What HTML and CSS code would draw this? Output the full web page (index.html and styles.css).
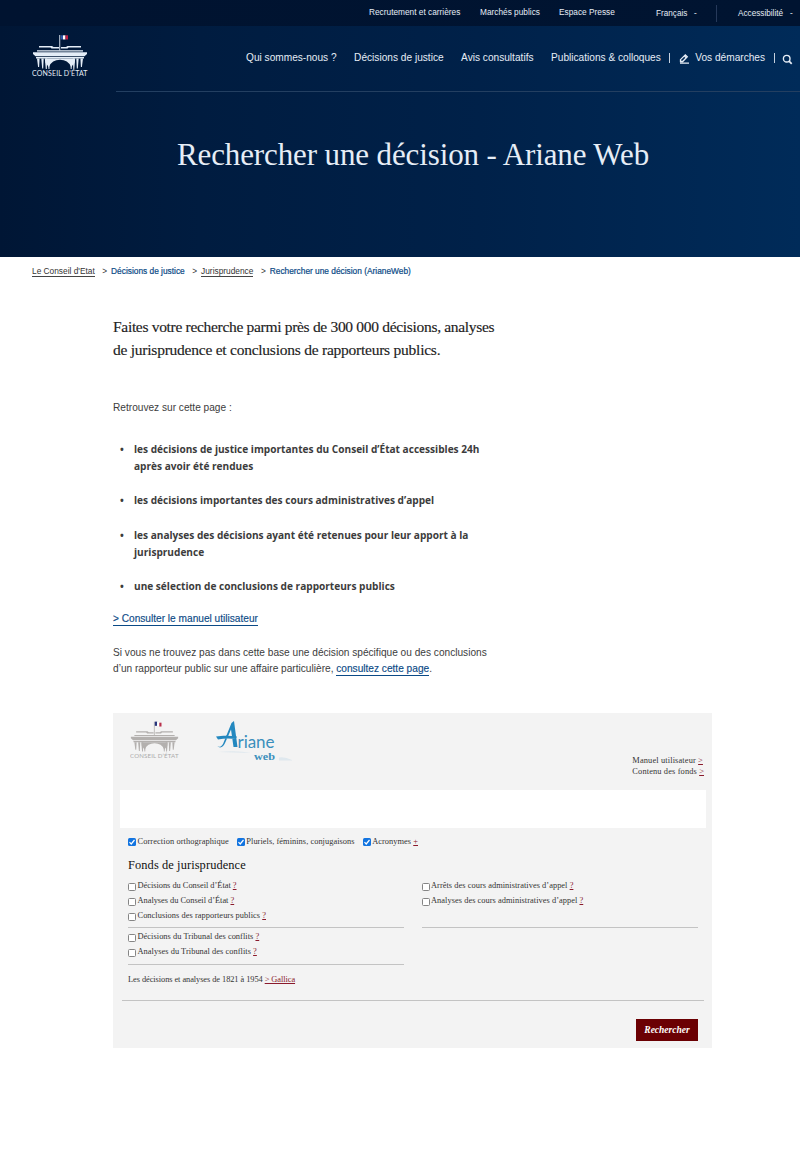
FILE: index.html
```html
<!DOCTYPE html>
<html lang="fr">
<head>
<meta charset="utf-8">
<title>Rechercher une décision - ArianeWeb</title>
<link rel="stylesheet" href="styles.css">
</head>
<body>
<header class="hero">
  <div class="topbar">
    <a>Recrutement et carrières</a>
    <a>Marchés publics</a>
    <a>Espace Presse</a>
    <a class="low">Français</a><span class="low">-</span>
    <i class="topsep"></i>
    <a class="low">Accessibilité</a><span class="low">-</span>
  </div>
  <div class="mainbar">
    <svg class="crest" viewBox="0 0 56 44">
      <defs>
        <g id="building">
          <path d="M7 12h13l1.500 1H27v1.500h-7.500l-1-1H7zM29 13h5l1.500-1H49v1.500H36.500l-1 1H29z"/>
          <path d="M5 16.300h46v1.200H5zM1 18.200h54v1.700l-2.500 2.300h-49L1 19.900zM4 23h48v1.500H4z"/>
          <path d="M13.500 24.500h29v4l-3.200 4.500q-3.300-7.300-11.300-7.300T16.700 33l-3.200-4.500z"/>
          <path d="M5 24.500h2.600l-.5 8.500h-1zM9.300 24.500h2.400l-.5 10h-1zM12.800 24.500h2.400l-.4 10.500h-1zM15.700 26h2.200l-.5 9h-.9zM48.400 24.500H51L49.900 33h-1zM44.300 24.500h2.400l-.9 10h-1zM40.800 24.500h2.400l-.9 10.500h-1zM38.100 26h2.200l-.7 9h-.9z"/>
          <path d="M27.300 1h.9v15.500h-.9z"/>
        </g>
      </defs>
      <use href="#building" fill="#e4edf7"/>
      <path d="M28.800 1.300h2.200v4.200h-2.200z" fill="#2d55a5"/><path d="M31 1.300h2.500v4.200H31z" fill="#fff"/><path d="M33.500 1.300H36v4.200h-2.500z" fill="#c31e43"/>
      <text x="0" y="41.500" textLength="55.500" class="cresttext">CONSEIL D’ÉTAT</text>
    </svg>
    <nav class="nav">
      <a>Qui sommes-nous ?</a>
      <a>Décisions de justice</a>
      <a>Avis consultatifs</a>
      <a class="last">Publications &amp; colloques</a>
      <i class="navsep"></i>
      <svg class="pen" viewBox="0 0 11 11"><path d="M1.500 6.600 6.300 1.800l2 2L3.700 8.500H1.500zM5.200 2.800l2 2M1 10.200h9" fill="none" stroke="#e6edf6" stroke-width="1.300"/></svg>
      <a class="last">Vos démarches</a>
      <i class="navsep"></i>
      <svg class="glass" viewBox="0 0 11 11"><circle cx="4.700" cy="4.700" r="3.300" fill="none" stroke="#e6edf6" stroke-width="1.400"/><path d="m7.100 7.100 2.600 2.700" stroke="#e6edf6" stroke-width="1.700"/></svg>
    </nav>
  </div>
  <h1 class="title">Rechercher une décision - Ariane Web</h1>
</header>
<div class="crumbs">
  <a class="lined">Le Conseil d'Etat</a><span>&gt;</span>
  <a class="blue">Décisions de justice</a><span>&gt;</span>
  <a class="lined">Jurisprudence</a><span>&gt;</span>
  <a class="blue">Rechercher une décision (ArianeWeb)</a>
</div>
<main class="content">
  <p class="lead">Faites votre recherche parmi près de 300 000 décisions, analyses<br><span class="second">de jurisprudence et conclusions de rapporteurs publics.</span></p>
  <p class="find">Retrouvez sur cette page :</p>
  <ul class="list">
    <li>les décisions de justice importantes du Conseil d’État accessibles 24h<br>après avoir été rendues</li>
    <li>les décisions importantes des cours administratives d’appel</li>
    <li>les analyses des décisions ayant été retenues pour leur apport à la<br>jurisprudence</li>
    <li>une sélection de conclusions de rapporteurs publics</li>
  </ul>
  <p class="manual"><a class="link">&gt; Consulter le manuel utilisateur</a></p>
  <p class="note">Si vous ne trouvez pas dans cette base une décision spécifique ou des conclusions<br>d’un rapporteur public sur une affaire particulière, <a class="link">consultez cette page</a>.</p>

  <section class="panel">
    <div class="panelhead">
      <svg class="crest2" viewBox="0 0 56 44">
        <use href="#building" fill="#b3b0ae"/>
        <path d="M28.300 1h2.700v4.800h-2.700z" fill="#27357c"/><path d="M31 1.500h2.500v4.500H31z" fill="#fff"/><path d="M33.500 2.200H36v4.400h-2.500z" fill="#b8304b"/>
        <text x="0" y="42.500" textLength="55.500" class="cresttext grey">CONSEIL D’ÉTAT</text>
      </svg>
      <svg class="ariane" viewBox="0 0 80 44">
        <path d="M1 26c2 1.500 4 1 6-2L15.500 3 18 1l3.500 26h-4L15 9.500 9.500 22c-2 5-5 7-8.500 4zM0 16.500c6-1 14-1 21 0l-1 2.500c-6-.8-12-.8-18 .5z" fill="#2488bf"/>
        <text x="21.500" y="27.500" textLength="37" class="ar1">riane</text>
        <text x="38" y="39.500" textLength="21" lengthAdjust="spacingAndGlyphs" class="ar2">web</text>
        <path d="M2 32q20-2 33 1zM63 37.500q6-1 13 2.500v.5H63z" fill="#dfe8ee"/>
      </svg>
      <div class="helps"><a>Manuel utilisateur <u>&gt;</u></a><a>Contenu des fonds <u>&gt;</u></a></div>
    </div>
    <div class="searchbox"></div>
    <div class="options">
      <label><i class="check on"><svg viewBox="0 0 8 8"><path d="M1.500 4.200 3.200 6 6.500 2"/></svg></i><span>Correction orthographique</span></label>
      <label><i class="check on"><svg viewBox="0 0 8 8"><path d="M1.500 4.200 3.200 6 6.500 2"/></svg></i><span>Pluriels, féminins, conjugaisons</span></label>
      <label><i class="check on"><svg viewBox="0 0 8 8"><path d="M1.500 4.200 3.200 6 6.500 2"/></svg></i><span>Acronymes <u>+</u></span></label>
    </div>
    <h2 class="fonds">Fonds de jurisprudence</h2>
    <div class="columns">
      <div class="col">
        <div class="group tall">
          <label><i class="check"></i><span class="snug">Décisions du Conseil d’État <u>?</u></span></label>
          <label><i class="check"></i><span class="snug">Analyses du Conseil d’État <u>?</u></span></label>
          <label><i class="check"></i><span>Conclusions des rapporteurs publics <u>?</u></span></label>
        </div>
        <div class="group short">
          <label><i class="check"></i><span>Décisions du Tribunal des conflits <u>?</u></span></label>
          <label><i class="check"></i><span>Analyses du Tribunal des conflits <u>?</u></span></label>
        </div>
      </div>
      <div class="col">
        <div class="group tall">
          <label><i class="check"></i><span>Arrêts des cours administratives d’appel <u>?</u></span></label>
          <label><i class="check"></i><span>Analyses des cours administratives d’appel <u>?</u></span></label>
        </div>
      </div>
    </div>
    <p class="gallica">Les décisions et analyses de 1821 à 1954 <u>&gt; Gallica</u></p>
    <div class="actions"><button class="submit">Rechercher</button></div>
  </section>
</main>
</body>
</html>
```
FILE: styles.css
```css
* { box-sizing: border-box; }
body { margin: 0; background: #fff; color: #3c3c3c; font-family: "Liberation Sans", Arial, sans-serif; }
h1, h2, p, ul { margin: 0; padding: 0; font-weight: normal; }
a, span { white-space: nowrap; }

/* Header */
.hero { height: 257px; background: linear-gradient(90deg, #001635 0%, #001c40 25%, #002149 60%, #002b59 100%); color: #e6edf6; }
.topbar { height: 26px; background: linear-gradient(90deg, #001330, #001431); display: grid; grid-template-columns: 111px 79px 97px 38px 22px 22px 52px auto; padding-left: 369px; font-size: 8.300px; line-height: 25px; justify-items: start; }
.low { padding-top: 1px; font-size: 8.200px; }
.topsep { width: 1px; height: 17px; margin-top: 5px; background: #26395a; }
.mainbar { height: 66px; display: flex; margin-left: 32px; }
.crest { width: 56px; height: 44px; margin-top: 8px; flex: none; }
.cresttext { font: 7px "Lato", sans-serif; fill: #e4edf7; }
.cresttext.grey { fill: #aaa; }
.nav { flex: 1; margin-left: 28px; padding-left: 130px; border-bottom: 1px solid #233f61; display: flex; font-size: 10.150px; line-height: 64px; }
.nav a { margin-right: 17.500px; }
.nav .last { margin-right: 0; }
.navsep { width: 1px; height: 10px; background: #c5d0de; margin: 27px 8.500px 0; flex: none; }
.pen { width: 11px; height: 11px; margin: 27px 5.500px 0 0; flex: none; }
.glass { width: 11px; height: 11px; margin: 28px 0 0 -1.500px; flex: none; }
.title { padding: 42px 0 0 177px; font: 31px/42px "Liberation Serif", serif; letter-spacing: -.12px; }

/* Breadcrumb */
.crumbs { display: flex; padding: 9px 0 0 32px; font-size: 8.330px; line-height: 11px; height: 24px; color: #333; }
.crumbs span { margin: 0 4px 0 7.500px; }
.blue { color: #0b4a86; -webkit-text-stroke: .2px #0b4a86; }
.lined { border-bottom: 1px solid #444; height: 11px; }

/* Editorial content */
.content { padding-left: 113px; }
.lead { padding-top: 34px; font: 15.500px/23px "Liberation Serif", serif; letter-spacing: -.31px; color: #222; -webkit-text-stroke: .15px #222; }
.second { letter-spacing: -.24px; }
.find { padding-top: 38px; font-size: 10.150px; line-height: 17px; }
.list { list-style: none; padding: 25px 0 0 21px; font: bold 10.100px/17px "Open Sans", sans-serif; }
.list li { margin-bottom: 17.400px; position: relative; }
.list li:last-child { margin-bottom: 14px; }
.list li::before { content: "•"; position: absolute; left: -14px; }
.manual { font-size: 10.150px; line-height: 17px; padding-top: 1px; }
.link { color: #0b4a86; border-bottom: 1px solid #0b4a86; padding-bottom: 1px; -webkit-text-stroke: .15px #0b4a86; }
.note { font-size: 10.130px; line-height: 16px; padding-top: 18px; }

/* Search panel */
.panel { width: 599px; height: 335px; margin-top: 36px; background: #f3f3f3; font-family: "Liberation Serif", serif; font-size: 8.400px; letter-spacing: .04px; color: #333; }
.panelhead { height: 77px; display: flex; padding: 7px 8px 0 17px; }
.crest2 { width: 49px; height: 40px; }
.ariane { width: 80px; height: 44px; margin-left: 37px; }
.ar1 { font: 17px "Lato", sans-serif; fill: #3a8fbc; }
.ar2 { font: bold 9.500px "Liberation Serif", serif; fill: #3a8fbc; }
.helps { margin-left: auto; padding-top: 35px; line-height: 11px; letter-spacing: .13px; display: flex; flex-direction: column; align-items: flex-start; }
u { color: #8a1a2c; }
.searchbox { height: 38px; margin: 0 6px 0 7px; background: #fff; }
.options { display: flex; gap: 8px; padding: 8px 0 0 15px; line-height: 12px; }
.options label:first-child { letter-spacing: .09px; }
label { display: flex; gap: 1.500px; }
.snug { letter-spacing: -.02px; }
.check { width: 8px; height: 8px; border: 1px solid #858585; border-radius: 1.500px; background: #fff; flex: none; }
.check.on { background: #1274e0; border: 0; margin-top: 2px; }
.check svg { display: block; width: 8px; height: 8px; fill: none; stroke: #fff; stroke-width: 1.200; }
.fonds { padding: 10px 0 0 15px; font-size: 12.400px; line-height: 14px; letter-spacing: .1px; color: #111; }
.columns { display: grid; grid-template-columns: 276px 276px; gap: 17.500px; padding: 6px 0 0 15px; }
.group { border-bottom: 1px solid #c3c3c3; line-height: 15px; }
.group .check { margin-top: 5px; }
.tall { height: 50px; }
.short { height: 37px; padding-top: 1px; }
.gallica { margin: 0 8px 0 9px; padding: 7px 0 0 6px; height: 36px; border-bottom: 1px solid #c3c3c3; line-height: 15px; letter-spacing: -.07px; }
.actions { display: flex; justify-content: flex-end; padding: 18px 14px 0 0; }
.submit { width: 62px; height: 22px; border: 0; padding: 0; background: #6b0003; color: #fff; font: italic bold 9.500px/22px "Liberation Serif", serif; }
```
